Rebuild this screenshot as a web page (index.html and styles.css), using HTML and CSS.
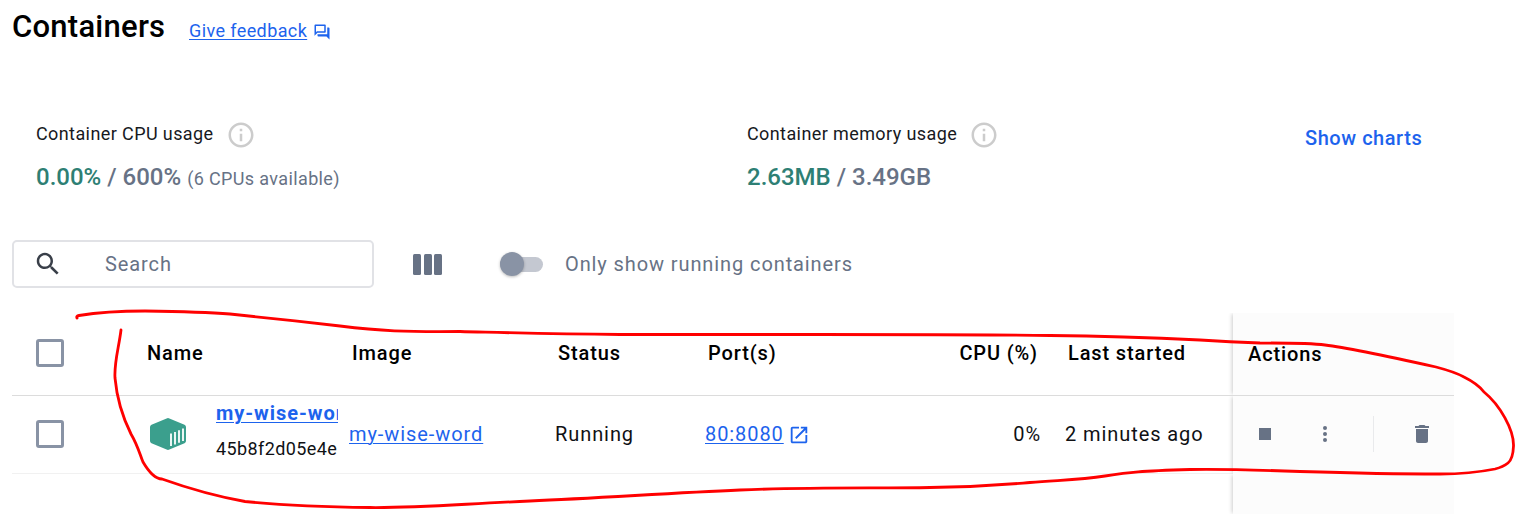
FILE: index.html
```html
<!DOCTYPE html>
<html lang="en">
<head>
<meta charset="utf-8">
<title>Containers</title>
<link rel="stylesheet" href="styles.css">
</head>
<body>
<main class="page">
  <header class="heading">
    <h1 class="title">Containers</h1>
    <a class="feedback"><span class="link">Give feedback</span>
      <svg class="feedback-icon" viewBox="0 0 24 24"><path d="M15 4v7H5.17L4 12.17V4h11m1-2H3c-.55 0-1 .45-1 1v14l4-4h10c.55 0 1-.45 1-1V3c0-.55-.45-1-1-1zm5 4h-2v9H6v2c0 .55.45 1 1 1h11l4 4V7c0-.55-.45-1-1-1z"/></svg>
    </a>
  </header>

  <section class="stats">
    <div class="stat">
      <div class="stat-label"><span>Container CPU usage</span>
        <svg class="info" viewBox="0 0 24 24"><path d="M11 7h2v2h-2zm0 4h2v6h-2zm1-9C6.48 2 2 6.48 2 12s4.48 10 10 10 10-4.480 10-10S17.520 2 12 2zm0 18c-4.410 0-8-3.590-8-8s3.590-8 8-8 8 3.590 8 8-3.590 8-8 8z"/></svg>
      </div>
      <div class="stat-value"><span class="used">0.00%</span> / 600% <span class="note">(6 CPUs available)</span></div>
    </div>
    <div class="stat">
      <div class="stat-label"><span>Container memory usage</span>
        <svg class="info" viewBox="0 0 24 24"><path d="M11 7h2v2h-2zm0 4h2v6h-2zm1-9C6.48 2 2 6.48 2 12s4.480 10 10 10 10-4.480 10-10S17.520 2 12 2zm0 18c-4.410 0-8-3.590-8-8s3.590-8 8-8 8 3.590 8 8-3.590 8-8 8z"/></svg>
      </div>
      <div class="stat-value"><span class="used">2.63MB</span> / 3.49GB</div>
    </div>
    <a class="charts">Show charts</a>
  </section>

  <section class="toolbar">
    <div class="search">
      <svg class="search-icon" viewBox="0 0 24 24"><path d="M15.5 14h-.79l-.28-.27C15.410 12.590 16 11.110 16 9.500 16 5.910 13.090 3 9.500 3S3 5.910 3 9.500 5.910 16 9.500 16c1.610 0 3.090-.59 4.230-1.570l.27.28v.79l5 4.990L20.490 19l-4.990-5zm-6 0C7.010 14 5 11.990 5 9.500S7.010 5 9.500 5 14 7.010 14 9.500 11.990 14 9.500 14z"/></svg>
      <span class="placeholder">Search</span>
    </div>
    <div class="columns"><i class="bar"></i><i class="bar"></i><i class="bar"></i></div>
    <div class="switch"><i class="thumb"></i></div>
    <span class="switch-label">Only show running containers</span>
  </section>

  <section class="table">
    <div class="row head">
      <div class="cell check"><i class="box"></i></div>
      <div class="cell">Name</div>
      <div class="cell inset">Image</div>
      <div class="cell inset">Status</div>
      <div class="cell inset">Port(s)</div>
      <div class="cell cpu cpu-head">CPU (%)</div>
      <div class="cell inset">Last started</div>
      <div class="cell actions actions-head">Actions</div>
    </div>
    <div class="row body">
      <div class="cell check"><i class="box"></i></div>
      <div class="cell name">
        <svg class="cube" viewBox="0 0 36 32"><path class="cube-body" d="M16.600.4Q18-.2 19.400.4L34.500 6.800Q36 7.500 36 9V23Q36 24.500 34.500 25.200L19.400 31.600Q18 32.200 16.600 31.600L1.500 25.200Q0 24.500 0 23V9Q0 7.500 1.500 6.800Z"/><path class="cube-bars" d="M21 15.500V28M25 14V26.500M29 12.200V24.800M33 10.500V23"/></svg>
        <div class="ident"><div class="ident-name">my-wise-word</div><div class="ident-id">45b8f2d05e4e</div></div>
      </div>
      <div class="cell"><a class="link image-link">my-wise-word</a></div>
      <div class="cell">Running</div>
      <div class="cell port"><a class="link">80:8080</a>
        <svg class="open" viewBox="0 0 24 24"><path d="M19 19H5V5h7V3H5c-1.110 0-2 .9-2 2v14c0 1.100.89 2 2 2h14c1.100 0 2-.9 2-2v-7h-2v7zM14 3v2h3.590l-9.830 9.830 1.410 1.410L19 6.410V10h2V3h-7z"/></svg>
      </div>
      <div class="cell cpu">0%</div>
      <div class="cell">2 minutes ago</div>
      <div class="cell actions">
        <i class="stop"></i>
        <svg class="more" viewBox="0 0 6 16"><circle cx="3" cy="2" r="2"/><circle cx="3" cy="8" r="2"/><circle cx="3" cy="14" r="2"/></svg>
        <i class="divider"></i>
        <svg class="trash" viewBox="0 0 14 18"><path d="M1 16c0 1.100.9 2 2 2h8c1.100 0 2-.9 2-2V4H1zM14 1h-3.500l-1-1h-5l-1 1H0v2h14z"/></svg>
      </div>
    </div>
    <div class="row rest"><div class="cell actions"></div></div>
  </section>
</main>
<svg class="scribble" viewBox="0 0 1515 514"><path d="M77 318Q76 316 79 315.500C94 313 112 311 145 311C180 311.500 205 312 230 314C260 317 305 322 340 326C380 331 405 332 460 331.500C520 333 550 334 620 334.500C700 335 760 334.500 820 334.500C900 334.500 990 334.500 1050 335.500C1110 336 1160 338 1200 340Q1230 342 1260 343C1290 343 1310 343 1325 345C1350 348 1400 359 1436 367Q1455 372 1464 377Q1478 384 1484 392C1500 405 1514 430 1513.500 446Q1513 459 1508 463Q1503 467 1495 469C1475 473 1463 474 1440 474C1400 474 1350 473 1300 471.500C1260 470 1225 469 1190 469.500C1140 471 1130 472 1105 476C1080 480 1060 480 1030 482.500C1000 485 980 487 930 487.500C880 488.500 810 487 740 490C670 493 600 498 530 501C460 504 420 508 370 507.500C330 507 280 505 245 501.500C220 497 190 489 162 479Q153 479 143 462C140 455 138 446 131 434C124 420 117 400 115 378C114 362 119 347 121 330"/></svg>
</body>
</html>
```
FILE: styles.css
```css
* { box-sizing: border-box; }
body { margin: 0; background: #fff; color: #000; font-family: Roboto, "Liberation Sans", sans-serif; }
svg { display: block; flex: none; fill: currentColor; }
i { display: block; flex: none; }
.page { width: 1515px; height: 514px; padding-left: 12px; overflow: hidden; display: flex; flex-direction: column; }
.link { color: #1d63ed; text-decoration: underline; text-decoration-thickness: 1px; text-underline-offset: 2px; }

.heading { height: 52px; display: flex; align-items: center; gap: 24px; }
.title { margin: 0; font-size: 31px; font-weight: 500; letter-spacing: .25px; width: 153px; white-space: nowrap; }
.feedback { display: flex; align-items: center; gap: 6px; padding-top: 9px; color: #1d63ed; font-size: 18px; letter-spacing: .4px; }
.feedback-icon { width: 18px; height: 18px; margin-top: 2px; }

.stats { height: 188px; padding: 68px 0 0 24px; display: grid; grid-template-columns: 711px 558px auto; align-items: start; }
.stat-label { height: 30px; display: flex; align-items: center; gap: 12px; font-size: 18px; line-height: 28px; letter-spacing: .4px; color: #17191e; }
.stat-label span { padding-bottom: 2px; }
.info { width: 30px; height: 30px; color: #ccc; }
.stat-value { margin-top: 12px; line-height: 30px; font-size: 24px; font-weight: 500; color: #677285; white-space: nowrap; }
.used { color: #2e7f74; }
.note { font-size: 18px; font-weight: 400; letter-spacing: .37px; }
.charts { padding-top: 6px; line-height: 24px; font-size: 20px; font-weight: 500; letter-spacing: .55px; color: #1d63ed; }

.toolbar { height: 48px; display: flex; align-items: center; color: #677285; font-size: 20px; letter-spacing: .9px; }
.search { width: 362px; height: 48px; border: 2px solid #e1e2e6; border-radius: 5px; padding-left: 19px; display: flex; align-items: center; gap: 42px; }
.search-icon { width: 30px; height: 30px; color: #393f49; }
.columns { display: flex; gap: 2.500px; margin-left: 39px; }
.bar { width: 8px; height: 21px; border-radius: 1.500px; background: #677285; }
.switch { width: 43px; height: 15px; margin-left: 58px; border-radius: 8px; background: #c4c8d1; display: flex; align-items: center; }
.thumb { width: 24px; height: 24px; border-radius: 50%; background: #8993a5; box-shadow: 0 1px 3px #0004; }
.switch-label { margin-left: 22px; }

.table { margin-top: 25px; width: 1442px; height: 201px; }
.row { display: grid; grid-template-columns: 135px 202px 206px 150px 208px 128px 24px 168px 221px; }
.row .cell:nth-child(7) { grid-column: 8; }
.cell { display: flex; align-items: center; font-size: 20px; letter-spacing: .92px; white-space: nowrap; }
.head { height: 83px; border-bottom: 1px solid #dcdcdc; }
.head .cell { font-weight: 500; letter-spacing: .87px; padding-bottom: 2px; }
.head .inset { padding-left: 3px; }
.body { height: 78px; border-bottom: 1px solid #f1f1f1; color: #101114; }
.body .cell { padding-bottom: 2px; }
.rest { height: 40px; }
.check { padding-left: 24px; }
.box { width: 28px; height: 28px; border: 3px solid #8993a5; border-radius: 3px; }
.cell.cpu { justify-content: flex-end; }
.head .cpu-head { padding-right: 3px; }
.name { gap: 30px; padding-left: 3px; }
.cube { width: 36px; height: 32px; color: #3b9f8d; }
.cube-bars { fill: none; stroke: #fff; stroke-width: 1.800; }
.ident { width: 122px; height: 76px; overflow: hidden; }
.ident-name { height: 34px; line-height: 34px; font-size: 20px; font-weight: 700; letter-spacing: .95px; color: #1d63ed; text-decoration: underline; text-decoration-thickness: 1px; text-underline-offset: 2px; }
.ident-id { margin-top: 1px; line-height: 36px; font-size: 18px; letter-spacing: .4px; }
.port { gap: 4px; }
.open { width: 22px; height: 22px; color: #1d63ed; margin-top: 2px; }
.actions { grid-column: 9; background: #fcfcfc; box-shadow: -2px 0 4px -1px #0003; clip-path: inset(0 0 0 -8px); color: #677285; }
.head .actions-head { padding: 0 0 0 15px; color: #000; }
.body .actions { padding-left: 26px; }
.stop { width: 12px; height: 12px; background: #677285; }
.more { width: 6px; height: 16px; margin-left: 51px; }
.divider { width: 1px; height: 36px; margin-left: 45px; background: #e9eaec; }
.trash { width: 14px; height: 18px; margin-left: 41px; }
.scribble { position: absolute; left: 0; top: 0; width: 1515px; height: 514px; fill: none; stroke: #f00; stroke-width: 2.800; stroke-linecap: round; stroke-linejoin: round; pointer-events: none; }
```
